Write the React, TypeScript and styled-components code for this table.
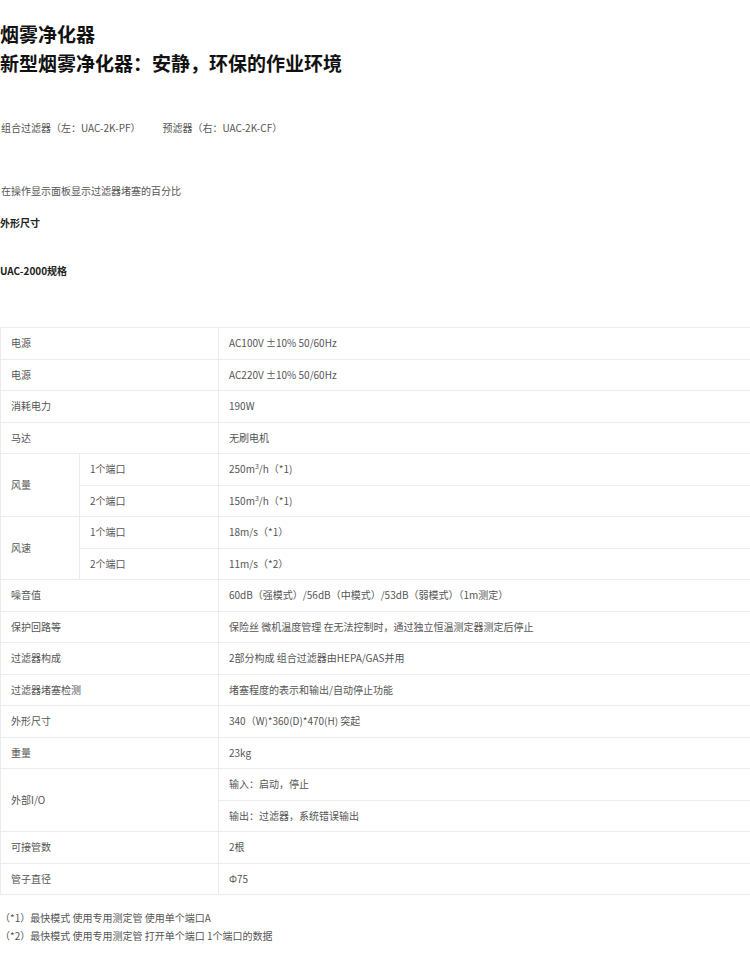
import React from "react";
import styled, { createGlobalStyle } from "styled-components";

const Global = createGlobalStyle`
  html, body { margin: 0; padding: 0; background: #fff; overflow-x: hidden; }
  body { font-family: "Noto Sans CJK SC", "Noto Sans", sans-serif; color: #555; }
`;

const Page = styled.div`
  width: 750px;
  padding-top: 19px;
  padding-bottom: 30px;
`;

const Title = styled.h1`
  margin: 0;
  font-size: 19px;
  line-height: 29px;
  font-weight: 700;
  color: #111;
`;

const Para = styled.p<{ $top: number }>`
  margin: ${(p) => p.$top}px 0 0 1px;
  font-size: 10px;
  line-height: 18px;
  color: #555;
`;

const Gap = styled.span`
  margin-left: 22px;
`;

const Heading = styled.h3<{ $top: number }>`
  margin: ${(p) => p.$top}px 0 0 0;
  font-size: 10px;
  line-height: 18px;
  font-weight: 700;
  color: #222;
`;

const Table = styled.table`
  margin-top: 47px;
  width: 780px;
  border-collapse: collapse;
  table-layout: fixed;
  font-size: 10px;
  color: #555;
`;

const Row = styled.tr`
  height: 31.5px;
`;

const Cell = styled.td`
  border: 1px solid #ececec;
  padding: 0 0 0 10px;
  vertical-align: middle;
  line-height: 16px;
  sup { font-size: 7px; line-height: 0; }
`;

const Notes = styled.div`
  margin-top: 14px;
  font-size: 10px;
  line-height: 18px;
  color: #555;
`;

type R =
  | { k: "single"; label: string; value: React.ReactNode }
  | { k: "group"; label: string; subs: { sub?: string; value: React.ReactNode }[]; merged?: boolean };

const rows: R[] = [
  { k: "single", label: "电源", value: "AC100V ±10% 50/60Hz" },
  { k: "single", label: "电源", value: "AC220V ±10% 50/60Hz" },
  { k: "single", label: "消耗电力", value: "190W" },
  { k: "single", label: "马达", value: "无刷电机" },
  {
    k: "group",
    label: "风量",
    subs: [
      { sub: "1个端口", value: <>250m<sup>3</sup>/h（*1)</> },
      { sub: "2个端口", value: <>150m<sup>3</sup>/h（*1)</> },
    ],
  },
  {
    k: "group",
    label: "风速",
    subs: [
      { sub: "1个端口", value: "18m/s（*1）" },
      { sub: "2个端口", value: "11m/s（*2）" },
    ],
  },
  { k: "single", label: "噪音值", value: "60dB（强模式）/56dB（中模式）/53dB（弱模式）（1m测定）" },
  { k: "single", label: "保护回路等", value: "保险丝 微机温度管理 在无法控制时，通过独立恒温测定器测定后停止" },
  { k: "single", label: "过滤器构成", value: "2部分构成 组合过滤器由HEPA/GAS并用" },
  { k: "single", label: "过滤器堵塞检测", value: "堵塞程度的表示和输出/自动停止功能" },
  { k: "single", label: "外形尺寸", value: "340（W)*360(D)*470(H) 突起" },
  { k: "single", label: "重量", value: "23kg" },
  {
    k: "group",
    label: "外部I/O",
    merged: true,
    subs: [{ value: "输入：启动，停止" }, { value: "输出：过滤器，系统错误输出" }],
  },
  { k: "single", label: "可接管数", value: "2根" },
  { k: "single", label: "管子直径", value: "Φ75" },
];

export default function App() {
  const body: React.ReactNode[] = [];
  rows.forEach((r, i) => {
    if (r.k === "single") {
      body.push(
        <Row key={i}>
          <Cell colSpan={2}>{r.label}</Cell>
          <Cell>{r.value}</Cell>
        </Row>
      );
    } else {
      r.subs.forEach((s, j) => {
        body.push(
          <Row key={`${i}-${j}`}>
            {j === 0 && (
              <Cell rowSpan={r.subs.length} colSpan={r.merged ? 2 : 1}>
                {r.label}
              </Cell>
            )}
            {!r.merged && <Cell>{s.sub}</Cell>}
            <Cell>{s.value}</Cell>
          </Row>
        );
      });
    }
  });

  return (
    <>
      <Global />
      <Page>
        <Title>烟雾净化器</Title>
        <Title>新型烟雾净化器：安静，环保的作业环境</Title>
        <Para $top={42}>
          组合过滤器（左：UAC-2K-PF）<Gap>预滤器（右：UAC-2K-CF）</Gap>
        </Para>
        <Para $top={45}>在操作显示面板显示过滤器堵塞的百分比</Para>
        <Heading $top={14}>外形尺寸</Heading>
        <Heading $top={30}>UAC-2000规格</Heading>
        <Table>
          <colgroup>
            <col style={{ width: 79 }} />
            <col style={{ width: 139 }} />
            <col />
          </colgroup>
          <tbody>{body}</tbody>
        </Table>
        <Notes>
          <div>（*1）最快模式 使用专用测定管 使用单个端口A</div>
          <div>（*2）最快模式 使用专用测定管 打开单个端口 1个端口的数据</div>
        </Notes>
      </Page>
    </>
  );
}
